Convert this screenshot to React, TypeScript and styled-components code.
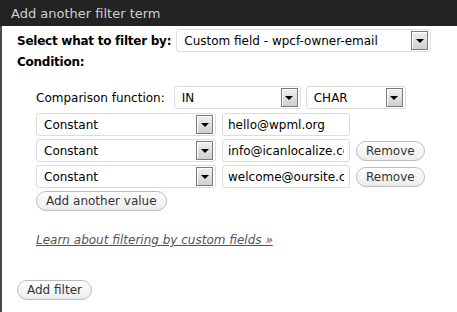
import styled, { createGlobalStyle } from "styled-components";

const GlobalStyle = createGlobalStyle`
  html, body {
    margin: 0;
    background: #ffffff;
  }
  body {
    font-family: "DejaVu Sans", Verdana, sans-serif;
    font-size: 12px;
    color: #000;
  }
`;

const StyledPanel = styled.div`
  width: 457px;
  height: 312px;
  box-sizing: border-box;
  border-left: 2px solid #4a4a4a;
  background: #fff;
`;

const StyledHeader = styled.div`
  height: 26px;
  margin-left: -2px;
  padding-left: 11px;
  display: flex;
  align-items: center;
  background: #232323;
  color: #cfcfcf;
  font-size: 13px;
`;

const StyledBody = styled.div`
  padding: 3px 0 0 15px;
`;

const StyledRow = styled.div<{ $gap?: number }>`
  display: flex;
  align-items: center;
  gap: ${(p) => p.$gap ?? 6}px;
`;

const StyledCompareRow = styled(StyledRow)`
  margin-bottom: 1px;
`;

const StyledCompareLabel = styled.span`
  margin-right: 4px;
`;

const StyledBoldLabel = styled.span`
  font-weight: bold;
  letter-spacing: -0.25px;
`;

const StyledConditionLabel = styled.div`
  font-weight: bold;
  letter-spacing: -0.25px;
  margin-top: 3px;
`;

const StyledCondition = styled.div`
  margin: 17px 0 0 19px;
  display: flex;
  flex-direction: column;
  align-items: flex-start;
  gap: 3px;
`;

const StyledFakeSelect = styled.div<{ $width: number }>`
  position: relative;
  width: ${(p) => p.$width}px;
  height: 23px;
  box-sizing: border-box;
  border: 1px solid #dcdcdc;
  border-radius: 3px;
  background: #fff;
  padding-left: 7px;
  display: flex;
  align-items: center;
  white-space: nowrap;
`;

const StyledArrowBox = styled.span`
  position: absolute;
  right: 2px;
  top: 1px;
  width: 17px;
  height: 19px;
  box-sizing: border-box;
  border: 1px solid #7a7a7a;
  box-shadow: inset 1px 1px 0 #ffffff;
  background: linear-gradient(#f0f0f0, #cfcfcf);
  display: flex;
  align-items: center;
  justify-content: center;

  &::after {
    content: "";
    border-left: 4px solid transparent;
    border-right: 4px solid transparent;
    border-top: 4px solid #000;
    margin-top: 1px;
  }
`;

const StyledInput = styled.input`
  width: 128px;
  height: 23px;
  box-sizing: border-box;
  border: 1px solid #dcdcdc;
  border-radius: 3px;
  padding: 0 5px;
  font-family: "DejaVu Sans", Verdana, sans-serif;
  font-size: 12px;
  color: #000;
  outline: none;
`;

const StyledButton = styled.button`
  height: 20px;
  box-sizing: border-box;
  padding: 0 9px;
  border: 1px solid #bcbcbc;
  border-radius: 10px;
  background: linear-gradient(#ffffff, #ececec);
  font-family: "DejaVu Sans", Verdana, sans-serif;
  font-size: 12px;
  color: #333;
  line-height: 18px;
`;

const StyledHelpLink = styled.a`
  margin-top: 19px;
  color: #555;
  font-style: italic;
  text-decoration: underline;
`;

const StyledFooter = styled.div`
  margin-top: 33px;
`;

const Select = ({ width, value }: { width: number; value: string }) => (
  <StyledFakeSelect $width={width}>
    {value}
    <StyledArrowBox />
  </StyledFakeSelect>
);

const values = [
  { email: "hello@wpml.org", removable: false },
  { email: "info@icanlocalize.com", removable: true },
  { email: "welcome@oursite.com", removable: true },
];

export default function App() {
  return (
    <>
      <GlobalStyle />
      <StyledPanel>
        <StyledHeader>Add another filter term</StyledHeader>
        <StyledBody>
          <StyledRow $gap={5}>
            <StyledBoldLabel>Select what to filter by:</StyledBoldLabel>
            <Select width={255} value="Custom field - wpcf-owner-email" />
          </StyledRow>
          <StyledConditionLabel>Condition:</StyledConditionLabel>
          <StyledCondition>
            <StyledCompareRow $gap={5}>
              <StyledCompareLabel>Comparison function:</StyledCompareLabel>
              <Select width={127} value="IN" />
              <Select width={100} value="CHAR" />
            </StyledCompareRow>
            {values.map((v) => (
              <StyledRow key={v.email}>
                <Select width={180} value="Constant" />
                <StyledInput defaultValue={v.email} readOnly />
                {v.removable && <StyledButton>Remove</StyledButton>}
              </StyledRow>
            ))}
            <StyledButton>Add another value</StyledButton>
            <StyledHelpLink href="#">
              Learn about filtering by custom fields »
            </StyledHelpLink>
          </StyledCondition>
          <StyledFooter>
            <StyledButton>Add filter</StyledButton>
          </StyledFooter>
        </StyledBody>
      </StyledPanel>
    </>
  );
}
